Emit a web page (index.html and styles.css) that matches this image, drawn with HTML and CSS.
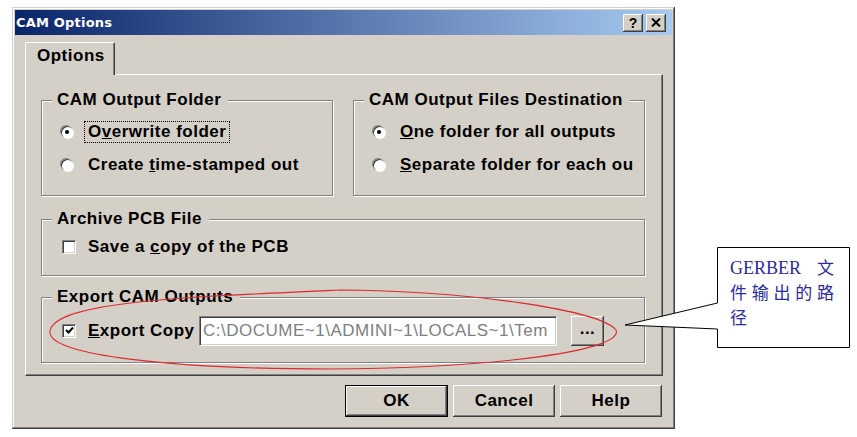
FILE: index.html
```html
<!DOCTYPE html>
<html lang="en">
<head>
    <meta charset="UTF-8">
    <title>CAM Options</title>
    <link rel="stylesheet" href="styles.css">
</head>
<body>
    <div class="dialog">
        <div class="titlebar">
            <span class="title">CAM Options</span>
            <div class="caption-btns">
                <span class="cbtn">?</span>
                <span class="cbtn">
                    <svg width="10" height="9" viewBox="0 0 10 9"><path d="M1 0.5 L9 8.5 M9 0.5 L1 8.5" stroke="#000" stroke-width="2"/></svg>
                </span>
            </div>
        </div>

        <div class="body">
            <div class="tabs">
                <div class="tab">Options</div>
            </div>

            <div class="panel">
                <div class="group-row">
                    <div class="group">
                        <div class="group-title">CAM Output Folder</div>
                        <div class="options">
                            <div class="option"><span class="radio on"></span><span class="label focus">O<u>v</u>erwrite folder</span></div>
                            <div class="option"><span class="radio"></span><span class="label">Create <u>t</u>ime-stamped out</span></div>
                        </div>
                    </div>
                    <div class="group">
                        <div class="group-title">CAM Output Files Destination</div>
                        <div class="options">
                            <div class="option"><span class="radio on"></span><span class="label"><u>O</u>ne folder for all outputs</span></div>
                            <div class="option"><span class="radio"></span><span class="label"><u>S</u>eparate folder for each ou</span></div>
                        </div>
                    </div>
                </div>

                <div class="group wide archive">
                    <div class="group-title">Archive PCB File</div>
                    <div class="option check-row"><span class="check"></span><span class="label">Save a <u>c</u>opy of the PCB</span></div>
                </div>

                <div class="group wide export">
                    <div class="group-title">Export CAM Outputs</div>
                    <div class="option check-row">
                        <span class="check on">
                            <svg width="9" height="9" viewBox="0 0 9 9"><path d="M1 4 L3.5 6.5 L8 1.5" stroke="#000" stroke-width="2" fill="none"/></svg>
                        </span>
                        <span class="label export-label"><u>E</u>xport Copy</span>
                        <div class="field">C:\DOCUME~1\ADMINI~1\LOCALS~1\Tem</div>
                        <div class="btn dots">...</div>
                    </div>
                </div>
            </div>

            <div class="buttons">
                <div class="btn default">OK</div>
                <div class="btn">Cancel</div>
                <div class="btn">Help</div>
            </div>
        </div>
    </div>

    <!-- hand drawn annotation on top of the screenshot -->
    <div class="annotation">
        <svg width="857" height="437" viewBox="0 0 857 437">
            <path d="M50 331 C55 302, 180 297, 340 290 C470 291, 600 310, 616 330 C625 350, 500 368, 330 369 C180 369, 45 356, 50 331 Z" fill="none" stroke="#dc2a2e" stroke-width="1.1"/>
            <path d="M717.5 247.5 H849.5 V347.5 H717.5 V329 L625 325 L717.5 303 Z" fill="#fff" stroke="#000" stroke-width="1"/>
        </svg>
        <div class="callout-text">
            <div class="line"><span class="latin">GERBER</span> 文</div>
            <div class="line">件输出的路</div>
            <div>径</div>
        </div>
    </div>
</body>
</html>
```

FILE: styles.css
```css
body {
    margin: 0;
    width: 857px;
    height: 437px;
    overflow: hidden;
    position: relative;
    background-color: #fff;
    font-family: 'Liberation Sans', Arial, sans-serif;
    color: #000;
}

.dialog {
    margin: 7px 0 0 12px;
    width: 663px;
    height: 422px;
    box-sizing: border-box;
    padding: 3px;
    background-color: #d4d0c8;
    box-shadow: inset -1px -1px #404040, inset 1px 1px #d4d0c8, inset -2px -2px #808080, inset 2px 2px #fff;
    font-size: 17px;
    font-weight: bold;
    letter-spacing: 0.5px;
}

.titlebar {
    height: 25px;
    display: flex;
    align-items: center;
    justify-content: space-between;
    padding: 0 6px 0 1px;
    background: linear-gradient(to right, #0a246a, #a6caf0);
}

.title {
    color: #fff;
    font: bold 13px 'DejaVu Sans', sans-serif;
    letter-spacing: 0.2px;
}

.caption-btns {
    display: flex;
    gap: 3px;
}

.cbtn {
    width: 20px;
    height: 18px;
    box-sizing: border-box;
    display: flex;
    align-items: center;
    justify-content: center;
    background-color: #d4d0c8;
    box-shadow: inset -1px -1px #404040, inset 1px 1px #fff, inset -2px -2px #808080;
    font: bold 14px 'Liberation Sans', Arial, sans-serif;
    letter-spacing: 0;
}

.body {
    padding: 7px 9px 0 10px;
}

.tabs {
    display: flex;
    height: 32px;
}

.tab {
    position: relative;
    z-index: 1;
    width: 90px;
    height: 33px;
    box-sizing: border-box;
    padding: 3px 0 0 11px;
    border: 1px solid;
    border-color: #fff #404040 transparent #fff;
    border-bottom: none;
    border-radius: 2px 2px 0 0;
    box-shadow: inset -1px 0 #808080;
    background-color: #d4d0c8;
    line-height: 20px;
}

.panel {
    height: 302px;
    box-sizing: border-box;
    padding: 25px 0 0 15px;
    border: 1px solid;
    border-color: #fff #404040 #404040 #fff;
    box-shadow: inset -1px -1px #808080;
}

.group-row {
    display: flex;
    gap: 20px;
}

.group {
    width: 292px;
    height: 96px;
    box-sizing: border-box;
    border: 1px solid #808080;
    box-shadow: inset 1px 1px #fff, 1px 1px #fff;
}

.group.wide {
    width: 604px;
}

.archive {
    margin-top: 23px;
    height: 57px;
}

.export {
    margin-top: 21px;
    height: 66px;
}

.group-title {
    width: fit-content;
    margin: -11px 0 0 10px;
    padding: 0 7px 0 5px;
    background-color: #d4d0c8;
    line-height: 20px;
}

.options {
    margin-top: 5px;
}

.option {
    display: flex;
    align-items: center;
    height: 33px;
    padding-left: 19px;
}

.radio {
    width: 12px;
    height: 12px;
    flex: none;
    border-radius: 50%;
    background-color: #fff;
    box-shadow: inset 1px 1px #404040, -1px -1px #808080, 1px 1px #fff;
}

.radio.on::after {
    content: "";
    display: block;
    width: 4px;
    height: 4px;
    margin: 4px;
    border-radius: 50%;
    background-color: #000;
}

.label {
    margin-left: 11px;
    padding: 0 3px;
    border: 1px dotted transparent;
    line-height: 20px;
    white-space: nowrap;
}

.label.focus {
    border-color: #000;
}

.check-row {
    margin-top: 8px;
    height: 20px;
    padding-left: 20px;
}

.export .check-row {
    height: 31px;
}

.check {
    width: 14px;
    height: 14px;
    flex: none;
    box-sizing: border-box;
    display: flex;
    align-items: center;
    justify-content: center;
    background-color: #fff;
    border: 1px solid;
    border-color: #808080 #fff #fff #808080;
    box-shadow: inset 1px 1px #404040, inset -1px -1px #d4d0c8;
}

.check-row .label {
    margin-left: 8px;
}

.export-label {
    width: 103px;
}

.field {
    width: 358px;
    height: 30px;
    box-sizing: border-box;
    margin-left: 4px;
    padding: 0 3px;
    background-color: #fff;
    border: 1px solid;
    border-color: #808080 #fff #fff #808080;
    box-shadow: inset 1px 1px #404040, inset -1px -1px #d4d0c8;
    color: #808080;
    font-weight: normal;
    line-height: 28px;
    white-space: nowrap;
    overflow: hidden;
}

.btn {
    width: 102px;
    height: 32px;
    box-sizing: border-box;
    display: flex;
    align-items: center;
    justify-content: center;
    background-color: #d4d0c8;
    box-shadow: inset -1px -1px #404040, inset 1px 1px #fff, inset -2px -2px #808080;
}

.btn.default {
    width: 103px;
    border: 1px solid #000;
}

.btn.dots {
    width: 33px;
    height: 30px;
    margin-left: 14px;
    padding-bottom: 4px;
}

.buttons {
    display: flex;
    justify-content: flex-end;
    gap: 5px;
    margin-top: 9px;
    padding-right: 1px;
}

.annotation {
    position: absolute;
    left: 0;
    top: 0;
    width: 857px;
    height: 437px;
    pointer-events: none;
}

.annotation svg {
    display: block;
}

.callout-text {
    position: absolute;
    left: 730px;
    top: 256px;
    width: 104px;
    color: #2b2ba5;
    font-family: 'Liberation Serif', 'Noto Sans CJK SC', serif;
    font-size: 17px;
    line-height: 25px;
}

.callout-text .latin {
    font-size: 18px;
}

.callout-text .line {
    text-align: justify;
    text-align-last: justify;
}
```
